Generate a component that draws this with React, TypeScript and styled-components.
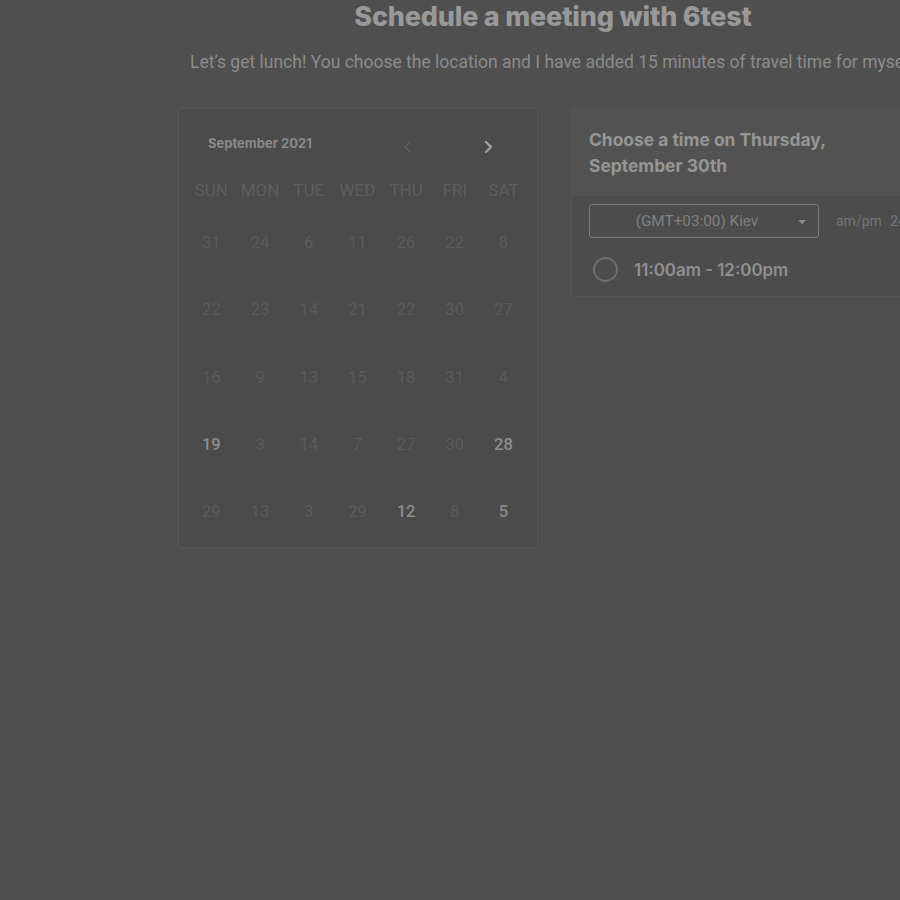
import React from "react";
import styled, { createGlobalStyle } from "styled-components";

const Global = createGlobalStyle`
  html, body { margin: 0; padding: 0; background: #4f4f4f; overflow: hidden; }
  body { font-family: Roboto, "Liberation Sans", sans-serif; }
`;

const Page = styled.div`
  width: 900px;
  height: 900px;
  overflow: hidden;
  background: #4f4f4f;
`;

const Container = styled.div`
  width: 750px;
  margin-left: 178px;
  display: flex;
  flex-direction: column;
`;

const Title = styled.h1`
  margin: 1px 0 0;
  font-family: Inter, "Liberation Sans", sans-serif;
  font-weight: 800;
  font-size: 27px;
  line-height: 32px;
  color: #999999;
  text-align: center;
  letter-spacing: -0.2px;
`;

const Subtitle = styled.p`
  margin: 18px 0 0 12px;
  font-family: Roboto, "Liberation Sans", sans-serif;
  font-weight: 400;
  font-size: 17.5px;
  line-height: 22px;
  color: #8c8c8c;
  white-space: nowrap;
`;

const Columns = styled.div`
  display: flex;
  gap: 33px;
  margin-top: 35px;
  align-items: flex-start;
`;

const CalendarCard = styled.div`
  width: 360px;
  height: 440px;
  flex-shrink: 0;
  border: 1px solid #565656;
  border-radius: 2px;
  background: #4b4b4b;
  box-sizing: border-box;
  padding: 0 8px;
`;

const CalHeader = styled.div`
  display: flex;
  align-items: center;
  height: 70px;
  padding: 0 0 0 21px;
`;

const MonthLabel = styled.div`
  font-family: Inter, "Liberation Sans", sans-serif;
  font-weight: 700;
  font-size: 13px;
  color: #8a8a8a;
  width: 190px;
  margin-top: -2px;
`;

const NavBtn = styled.div<{ $active?: boolean }>`
  width: 20px;
  height: 20px;
  display: flex;
  align-items: center;
  justify-content: center;
  margin-left: ${(p) => (p.$active ? "60px" : "0")};
  margin-top: 6px;
  color: ${(p) => (p.$active ? "#a3a3a3" : "#5e5e5e")};
`;

const Grid = styled.div`
  display: grid;
  grid-template-columns: repeat(7, 48.7px);
`;

const DayName = styled.div`
  text-align: center;
  font-family: Roboto, "Liberation Sans", sans-serif;
  font-size: 17px;
  color: #5f5f5f;
  height: 24px;
  line-height: 24px;
  margin-top: -1px;
`;

const DayCell = styled.div<{ $bold?: boolean }>`
  text-align: center;
  height: 67.3px;
  line-height: 67.3px;
  font-family: Roboto, "Liberation Sans", sans-serif;
  font-size: 16.5px;
  font-weight: ${(p) => (p.$bold ? 500 : 400)};
  color: ${(p) => (p.$bold ? "#8e8e8e" : "#5c5c5c")};
`;

const Days = styled(Grid)`
  margin-top: 7px;
`;

const TimeCard = styled.div`
  width: 357px;
  flex-shrink: 0;
  border: 1px solid #555555;
  border-radius: 2px;
  background: #4c4c4c;
  height: 189px;
  box-sizing: border-box;
  overflow: hidden;
`;

const TimeHeader = styled.div`
  background: #525252;
  height: 87px;
  padding: 18px 17px 0;
  box-sizing: border-box;
  font-family: Inter, "Liberation Sans", sans-serif;
  font-weight: 700;
  font-size: 17.4px;
  line-height: 26px;
  color: #969696;
`;

const Controls = styled.div`
  display: flex;
  align-items: center;
  padding: 8px 0 0 17px;
  gap: 17px;
`;

const Select = styled.div`
  width: 230px;
  height: 34px;
  flex-shrink: 0;
  border: 1px solid #7b7b7b;
  border-radius: 3px;
  box-sizing: border-box;
  display: flex;
  align-items: center;
  position: relative;
  font-family: Roboto, "Liberation Sans", sans-serif;
  font-size: 15.3px;
  color: #818181;
`;

const SelectText = styled.span`
  flex: 1;
  text-align: center;
  padding-right: 14px;
`;

const Caret = styled.span`
  position: absolute;
  right: 12px;
  top: 15px;
  width: 0;
  height: 0;
  border-left: 4px solid transparent;
  border-right: 4px solid transparent;
  border-top: 4px solid #8a8a8a;
`;

const Format = styled.div`
  font-family: Roboto, "Liberation Sans", sans-serif;
  font-size: 14px;
  color: #777777;
  white-space: nowrap;
  word-spacing: 5px;
`;

const Slot = styled.div`
  display: flex;
  align-items: center;
  gap: 16px;
  padding: 19px 21px 0;
`;

const Radio = styled.div`
  width: 25px;
  height: 25px;
  border: 2px solid #6f6f6f;
  border-radius: 50%;
  box-sizing: border-box;
`;

const SlotText = styled.span`
  font-family: Inter, "Liberation Sans", sans-serif;
  font-weight: 600;
  font-size: 16.9px;
  color: #909090;
`;

const weeks: [string, boolean][][] = [
  ["31", "24", "6", "11", "26", "22", "8"].map((d) => [d, false]),
  ["22", "23", "14", "21", "22", "30", "27"].map((d) => [d, false]),
  ["16", "9", "13", "15", "18", "31", "4"].map((d) => [d, false]),
  [["19", true], ["3", false], ["14", false], ["7", false], ["27", false], ["30", false], ["28", true]],
  [["29", false], ["13", false], ["3", false], ["29", false], ["12", true], ["8", false], ["5", true]],
];

const dayNames = ["SUN", "MON", "TUE", "WED", "THU", "FRI", "SAT"];

const Chevron = ({ dir }: { dir: "left" | "right" }) => (
  <svg width="14" height="14" viewBox="0 0 14 14" fill="none">
    <path
      d={dir === "left" ? "M9 2 L4 7 L9 12" : "M5 2 L10 7 L5 12"}
      stroke="currentColor"
      strokeWidth={dir === "left" ? 1.6 : 2.2}
      strokeLinecap="round"
      strokeLinejoin="round"
    />
  </svg>
);

export default function App() {
  return (
    <Page>
      <Global />
      <Container>
        <Title>Schedule a meeting with 6test</Title>
        <Subtitle>
          Let’s get lunch! You choose the location and I have added 15 minutes of travel time for myself.
        </Subtitle>
        <Columns>
          <CalendarCard>
            <CalHeader>
              <MonthLabel>September 2021</MonthLabel>
              <NavBtn>
                <Chevron dir="left" />
              </NavBtn>
              <NavBtn $active>
                <Chevron dir="right" />
              </NavBtn>
            </CalHeader>
            <Grid>
              {dayNames.map((d) => (
                <DayName key={d}>{d}</DayName>
              ))}
            </Grid>
            <Days>
              {weeks.flat().map(([d, b], i) => (
                <DayCell key={i} $bold={b}>
                  {d}
                </DayCell>
              ))}
            </Days>
          </CalendarCard>
          <TimeCard>
            <TimeHeader>
              Choose a time on Thursday,
              <br />
              September 30th
            </TimeHeader>
            <Controls>
              <Select>
                <SelectText>(GMT+03:00) Kiev</SelectText>
                <Caret />
              </Select>
              <Format>am/pm 24h</Format>
            </Controls>
            <Slot>
              <Radio />
              <SlotText>11:00am - 12:00pm</SlotText>
            </Slot>
          </TimeCard>
        </Columns>
      </Container>
    </Page>
  );
}
